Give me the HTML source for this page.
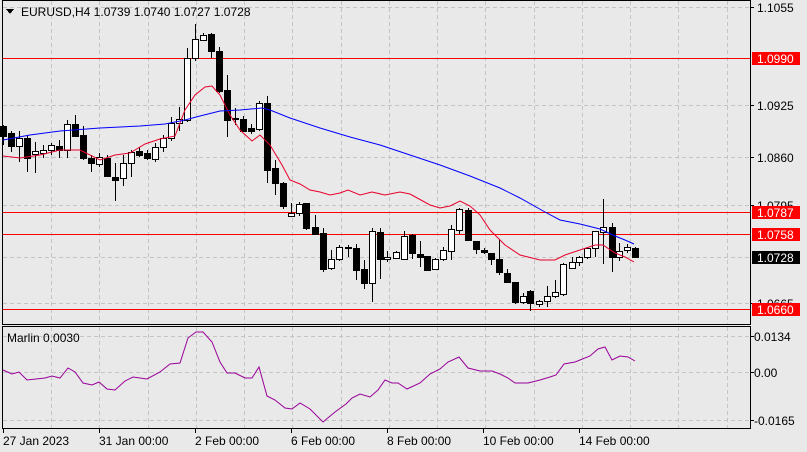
<!DOCTYPE html>
<html><head><meta charset="utf-8"><style>
html,body{margin:0;padding:0;background:#e9e9e9;}
svg{display:block;font-family:"Liberation Sans",sans-serif;}
</style></head><body>
<svg id="s" width="807" height="452" xmlns="http://www.w3.org/2000/svg" shape-rendering="crispEdges">
<rect width="807" height="452" fill="#e9e9e9"/>
<g id="grid" stroke="#c4c4c4" stroke-dasharray="4,3" stroke-width="1"></g>
<g id="lines"></g>
<g id="candles"></g>
<g id="ma" fill="none" shape-rendering="auto"></g>
<rect x="2.5" y="0.5" width="748" height="324" fill="none" stroke="#000"/>
<rect x="2.5" y="326.5" width="748" height="102" fill="none" stroke="#000"/>
<g font-size="12" fill="#000">
<path d="M6 9 L14 9 L10 14 Z" fill="#000"/>
<text x="21" y="16">EURUSD,H4  1.0739 1.0740 1.0727 1.0728</text>
<text x="7" y="342">Marlin 0.0030</text>
</g>
<g id="axis" font-size="12"></g>
</svg>
<script>
var NS="http://www.w3.org/2000/svg",s=document.getElementById('s');
function el(p,t,a){var e=document.createElementNS(NS,t);for(var k in a)e.setAttribute(k,a[k]);document.getElementById(p).appendChild(e);return e;}
// vertical grid
for(var x=51;x<750;x+=48.25){var xx=Math.round(x)+.5;el('grid','line',{x1:xx,y1:1,x2:xx,y2:324});el('grid','line',{x1:xx,y1:327,x2:xx,y2:428});}
[7,58,105,157,205,257,303].forEach(function(y){el('grid','line',{x1:3,y1:y+.5,x2:750,y2:y+.5});});
[336,372,420].forEach(function(y){el('grid','line',{x1:3,y1:y+.5,x2:750,y2:y+.5});});
// red horizontal lines
[58,212,234,309].forEach(function(y){el('lines','line',{x1:3,y1:y+.5,x2:750,y2:y+.5,stroke:'#ff0000'});});
// candles: x, bodyTop, bodyBot, wickTop, wickBot, bull
var C=[[3,126,136,125,145,0],[11,133,146,131,152,0],[19,138,146,131,162,1],[27,138,158,135,172,0],[35,151,154,142,173,1],[43,150,153,145,158,1],[51,145,150,143,155,1],[59,146,150,140,158,0],[67,124,150,120,158,1],[75,124,136,115,137,0],
[83,135,158,126,160,0],[91,158,163,155,172,0],[99,157,164,153,167,1],[107,158,176,155,177,0],[115,177,180,163,201,0],[123,163,178,155,186,1],[131,152,163,150,177,1],[139,151,155,147,157,0],[147,153,158,150,160,0],[155,147,159,143,162,1],[163,138,147,135,152,1],[171,123,138,117,141,1],[179,119,123,107,131,1],
[187,58,120,48,122,1],[195,39,58,24,61,1],[203,35,40,33,40,1],[211,34,51,33,58,0],[219,51,91,47,93,0],[227,90,120,75,137,0],[235,118,119,108,125,0],[243,119,131,116,132,0],[251,128,131,124,134,0],[259,103,129,101,131,1],[267,103,170,96,183,0],[275,168,183,160,195,0],[283,183,206,182,209,0],
[291,213,216,203,216,1],[299,204,213,202,216,1],[306,203,228,203,230,0],[315,227,234,215,234,0],[323,233,269,228,272,0],[331,259,268,250,270,1],[339,247,259,245,261,1],[348,247,248,245,257,0],[356,248,270,244,280,0],[364,269,283,260,289,0],[372,231,283,228,302,1],[380,232,259,228,279,0],[387,257,259,251,262,1],[396,252,258,251,259,1],[404,236,259,231,260,1],[412,235,253,234,259,0],[420,254,257,241,267,0],[427,256,270,256,271,0],[435,259,269,258,270,1],[443,250,259,247,261,1],[451,229,251,225,260,1],[459,209,230,208,234,1],[468,210,240,208,241,0],[476,241,249,241,254,0],[484,250,252,248,254,0],[491,253,259,253,265,0],[499,259,272,239,275,0],[507,273,282,269,282,0],[515,282,302,282,304,0],[523,296,302,293,304,1],[530,291,303,290,311,0],[539,301,304,300,307,1],[547,296,301,286,307,1],[555,292,296,280,298,1],
[563,264,294,263,296,1],[572,262,268,257,269,1],[579,257,262,256,266,1],[587,248,257,247,259,1],[595,231,248,231,257,1],[603,227,232,199,264,1],[612,227,257,223,272,0],[619,251,257,243,261,1],[627,247,250,244,253,1],[635,248,257,247,258,0]];
C.forEach(function(c){var x=c[0];el('candles','line',{x1:x+.5,y1:c[3],x2:x+.5,y2:c[4],stroke:'#000'});
var h=Math.max(1,c[2]-c[1]);el('candles','rect',{x:x-2.5,y:c[1]+.5,width:6,height:h,fill:c[5]?'#fff':'#000',stroke:'#000'});});
function pl(pts,col,w){el('ma','polyline',{points:pts.map(function(p){return p.join(',')}).join(' '),stroke:col,'stroke-width':w||1});}
pl([[3,156],[20,158],[40,155],[60,150],[80,150],[100,160],[115,155],[130,153],[145,144],[160,139],[175,136],[185,110],[195,95],[205,87],[212,86],[220,95],[230,115],[240,130],[252,141],[260,135],[270,145],[282,165],[290,180],[300,184],[310,190],[320,192],[330,195],[340,193],[348,190],[360,195],[372,192],[385,195],[400,192],[410,194],[430,205],[440,208],[450,206],[460,201],[470,206],[480,215],[490,230],[505,245],[520,255],[540,260],[555,260],[565,255],[580,250],[595,245],[603,245],[615,253],[625,257],[634,262]],'#e8002a');
pl([[3,140],[30,135],[60,131],[100,128],[140,126],[165,124],[185,120],[200,116],[220,111],[240,110],[262,108],[270,110],[290,118],[320,128],[350,137],[380,145],[410,155],[440,165],[470,176],[500,188],[520,198],[545,212],[560,220],[580,224],[600,229],[615,236],[625,240],[634,244]],'#0000ff');
pl([[3,370],[12,374],[19,372],[27,380],[45,378],[52,376],[60,378],[68,368],[75,372],[83,383],[92,385],[99,382],[107,389],[115,390],[125,381],[133,377],[147,379],[160,372],[170,364],[180,363],[188,338],[196,332],[203,332],[212,342],[220,362],[227,373],[235,373],[245,378],[252,378],[259,367],[267,396],[275,400],[285,408],[292,409],[300,403],[310,409],[323,422],[335,412],[346,404],[352,398],[360,394],[370,397],[378,390],[385,380],[392,383],[398,383],[407,389],[420,383],[430,374],[440,369],[448,362],[459,357],[468,368],[480,371],[492,371],[500,374],[508,378],[515,383],[528,383],[540,380],[550,377],[556,375],[564,364],[575,362],[590,356],[598,349],[605,347],[612,360],[620,356],[628,357],[635,361]],'#990099');
// axis
var A=[[1.1055,7],[1.0925,105],[1.0860,157],[1.0795,205],[1.0665,303]];
A.forEach(function(a){el('axis','line',{x1:750,y1:a[1]+.5,x2:754,y2:a[1]+.5,stroke:'#000'});var t=el('axis','text',{x:757,y:a[1]+5});t.textContent=a[0].toFixed(4);});
[['0.0134',336],['0.00',372],['-0.0165',420]].forEach(function(a){el('axis','line',{x1:750,y1:a[1]+.5,x2:754,y2:a[1]+.5,stroke:'#000'});var t=el('axis','text',{x:754,y:a[1]+5});t.textContent=a[0];});
[['1.0990',58,'#ff0000'],['1.0787',212,'#ff0000'],['1.0758',234,'#ff0000'],['1.0728',257,'#000'],['1.0660',309,'#ff0000']].forEach(function(b){el('axis','rect',{x:752,y:b[1]-6,width:48,height:13,fill:b[2]});var t=el('axis','text',{x:757,y:b[1]+5,fill:'#fff'});t.textContent=b[0];});
[['27 Jan 2023',3],['31 Jan 00:00',99],['2 Feb 00:00',195],['6 Feb 00:00',291],['8 Feb 00:00',387],['10 Feb 00:00',483],['14 Feb 00:00',579]].forEach(function(l){el('axis','line',{x1:l[1]+.5,y1:428,x2:l[1]+.5,y2:433,stroke:'#000'});var t=el('axis','text',{x:l[1],y:445});t.textContent=l[0];});
</script>
</body></html>
